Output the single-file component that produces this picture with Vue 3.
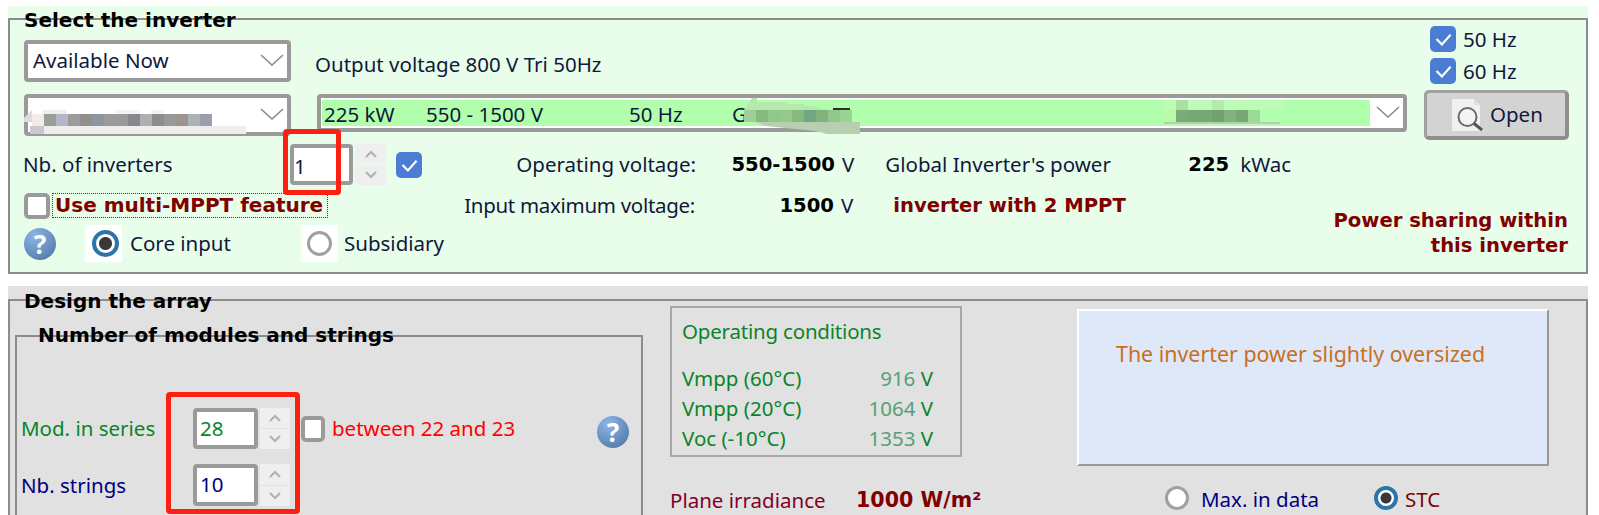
<script setup>
// blurred-out parts of the screenshot, one colour per mosaic cell
const brandBlur = ['#f3ece6', '#9a9d99', '#b2b8ca', '#9c9c9c', '#958f8c', '#8f969e', '#9b9b9e', '#9a9a9a', '#87878d', '#adb1ae', '#8f8c8c', '#999999', '#9e9390', '#acb1b3', '#9e9eaa']
const modelBlur = ['#9fce98', '#84ba80', '#8fc98a', '#93c88e', '#89b87d', '#71a685', '#82b27e', '#8fc88a', '#99d492']
const refTop = ['#bdfcb6', '#a9dfa0', '#bdfcb6', '#bdfcb6', '#b5eaac', '#bdfcb6', '#bdfcb6', '#bdfcb6', '#bdfcb6', '#bdfcb6']
const refLow = ['#b9f9a8', '#7bab77', '#75a974', '#75a974', '#6fa26f', '#81b37c', '#75a872', '#9cdb97']
</script>

<template>
  <div class="page">
    <!-- Select the inverter -->
    <section class="panel panel-green">
      <div class="group group-top">
        <h2 class="legend">Select the inverter</h2>

        <div class="top-band">
          <div class="top-left">
            <div class="row-a">
              <div class="select select-small">
                <span class="avail">Available Now</span>
                <svg class="chevron" viewBox="0 0 24 12"><path d="M1 1 L12 11 L23 1" /></svg>
              </div>
              <span class="output-text">Output voltage 800 V Tri 50Hz</span>
            </div>
            <div class="row-b">
              <div class="select select-small">
                <svg class="blur blur-brand" width="240" height="30" viewBox="0 0 240 30">
                  <path d="M0 12 L8 4 V16 Z M0 12 V16 H8 Z" fill="#dcdcdc" />
                  <rect x="19" y="4" width="24" height="4" fill="#f0efe6" />
                  <rect x="91" y="4" width="24" height="4" fill="#f4f4f4" />
                  <rect x="127" y="4" width="12" height="4" fill="#f2f2f2" />
                  <rect v-for="(c, i) in brandBlur" :key="i" :x="8 + i * 12" y="8" width="12" height="12" :fill="c" />
                  <rect x="6" y="20" width="216" height="8" fill="#eeeeee" />
                  <rect x="6" y="20" width="14" height="8" fill="#c9cacf" />
                </svg>
                <svg class="chevron" viewBox="0 0 24 12"><path d="M1 1 L12 11 L23 1" /></svg>
              </div>
              <div class="select select-model">
                <div class="model-line">
                  <span class="m-power">225 kW</span>
                  <span class="m-volt">550 - 1500 V</span>
                  <span class="m-hz">50 Hz</span>
                  <span class="m-g">G</span>
                  <svg class="blur blur-model" width="160" height="50" viewBox="0 0 160 50">
                    <path d="M32 8 H37 V12 H67 V14 H84 V16 H97 V18 L113 20 H24 Z" fill="#b7e8ae" />
                    <rect x="113" y="18" width="17" height="2" fill="#2a2f20" />
                    <rect v-for="(c, i) in modelBlur" :key="i" :x="24 + i * 12" y="20" width="12" height="12" :fill="c" />
                    <path d="M36 32 H140 V44 H107 L95 41 L65 38 L45 36 Z" fill="#b7cfb0" />
                  </svg>
                  <svg class="blur blur-ref" width="160" height="50" viewBox="0 0 160 50">
                    <rect v-for="(c, i) in refTop" :key="i" :x="14 + i * 12" y="10" width="12" height="10" :fill="c" />
                    <rect v-for="(c, i) in refLow" :key="i" :x="14 + i * 12" y="20" width="12" height="12" :fill="c" />
                    <rect x="14" y="32" width="116" height="2" fill="#b3cfaf" />
                  </svg>
                </div>
                <svg class="chevron" viewBox="0 0 24 12"><path d="M1 1 L12 11 L23 1" /></svg>
              </div>
            </div>
          </div>

          <div class="top-right">
            <label class="hz">
              <span class="check on"><svg viewBox="0 0 24 24"><path d="M6 12 L11 17 L19 8" /></svg></span>50 Hz
            </label>
            <label class="hz">
              <span class="check on"><svg viewBox="0 0 24 24"><path d="M6 12 L11 17 L19 8" /></svg></span>60 Hz
            </label>
            <button class="open-btn">
              <svg class="open-icon" width="31" height="32" viewBox="0 0 31 32">
                <path d="M0 0 H22 L28 6 V32 H0 Z" fill="#f0f0f0" />
                <path d="M22 0 V6 H28" fill="#dedede" />
                <circle cx="15.5" cy="18" r="9" fill="#f4f4f4" stroke="#6a6a6a" stroke-width="2" />
                <path d="M22 24.5 L30 31" stroke="#555" stroke-width="3" />
              </svg>
              Open
            </button>
          </div>
        </div>

        <div class="low-band">
          <div class="low-left">
            <div class="row-c">
              <span class="nb-label">Nb. of inverters</span>
              <div class="spin">
                <div class="spin-input spin-input-one">1</div>
                <div class="spin-btns">
                  <span><svg viewBox="0 0 14 8"><path d="M2 7 L7 2 L12 7" /></svg></span>
                  <span><svg viewBox="0 0 14 8"><path d="M2 1 L7 6 L12 1" /></svg></span>
                </div>
                <div class="red-box red-box-one"></div>
              </div>
              <span class="check on check-nb"><svg viewBox="0 0 24 24"><path d="M6 12 L11 17 L19 8" /></svg></span>
              <span class="stat-label stat-label-c">Operating voltage:</span>
              <b class="stat-value">550-1500</b>
              <span class="unit">V</span>
              <span class="global-label">Global Inverter's power</span>
              <b>225</b>
              <span class="kwac">kWac</span>
            </div>
            <div class="row-d">
              <span class="check"></span>
              <span class="mppt-label">Use multi-MPPT feature</span>
              <span class="stat-label stat-label-d">Input maximum voltage:</span>
              <b class="stat-value">1500</b>
              <span class="unit">V</span>
              <b class="mppt-note">inverter with 2 MPPT</b>
            </div>
            <div class="row-e">
              <span class="help">?</span>
              <div class="radio-opt radio-core">
                <span class="radio-box"><span class="radio on"></span></span>
                Core input
              </div>
              <div class="radio-opt radio-sub">
                <span class="radio-box"><span class="radio"></span></span>
                Subsidiary
              </div>
            </div>
          </div>
          <b class="power-sharing">Power sharing within<br>this inverter</b>
        </div>
      </div>
    </section>

    <!-- Design the array -->
    <section class="panel panel-gray">
      <div class="group group-design">
        <h2 class="legend">Design the array</h2>

        <div class="group group-modules">
          <h2 class="legend legend-modules">Number of modules and strings</h2>
          <div class="red-box red-box-two"></div>

          <div class="mod-row mod-series">
            <span class="mod-label green">Mod. in series</span>
            <div class="spin spin-mod">
              <div class="spin-input green">28</div>
              <div class="spin-btns">
                <span><svg viewBox="0 0 14 8"><path d="M2 7 L7 2 L12 7" /></svg></span>
                <span><svg viewBox="0 0 14 8"><path d="M2 1 L7 6 L12 1" /></svg></span>
              </div>
            </div>
            <span class="check check-mod"></span>
            <span class="between">between 22 and 23</span>
            <span class="help help-mod">?</span>
          </div>
          <div class="mod-row mod-strings">
            <span class="mod-label navy">Nb. strings</span>
            <div class="spin spin-mod">
              <div class="spin-input navy">10</div>
              <div class="spin-btns">
                <span><svg viewBox="0 0 14 8"><path d="M2 7 L7 2 L12 7" /></svg></span>
                <span><svg viewBox="0 0 14 8"><path d="M2 1 L7 6 L12 1" /></svg></span>
              </div>
            </div>
          </div>
        </div>

        <div class="design-right">
          <div class="boxes">
            <div class="op-box">
              <div class="op-title">Operating conditions</div>
              <div class="op-row"><span>Vmpp (60°C)</span><span><em>916</em> V</span></div>
              <div class="op-row"><span>Vmpp (20°C)</span><span><em>1064</em> V</span></div>
              <div class="op-row"><span>Voc (-10°C)</span><span><em>1353</em> V</span></div>
            </div>
            <div class="msg-box">The inverter power slightly oversized</div>
          </div>
          <div class="plane-row">
            <span class="plane-label">Plane irradiance</span>
            <b class="plane-value">1000 W/m²</b>
            <span class="radio radio-small radio-max"></span>
            <span class="navy max-label">Max. in data</span>
            <span class="radio radio-small on radio-stc"></span>
            <span class="stc-label">STC</span>
          </div>
        </div>
      </div>
    </section>
  </div>
</template>

<style scoped>
.page {
  width: 1599px;
  height: 515px;
  overflow: hidden;
  background: #fff;
  font-family: "Noto Sans", sans-serif;
  font-size: 20.5px;
  color: #10183a;
  line-height: 25px;
}

.panel {
  width: 1580px;
  margin-left: 8px;
  box-sizing: border-box;
  overflow: hidden;
}

.panel-green {
  margin-top: 6px;
  height: 268px;
  padding-top: 12px;
  background: #e9fdeb;
}

.panel-gray {
  margin-top: 12px;
  height: 229px;
  padding-top: 13px;
  background: #e1e1e1;
}

/* group box with a legend cut into the top border */
.group {
  position: relative;
  box-sizing: border-box;
  border: 2px solid #8c8c8c;
}

.group-top {
  height: 256px;
  padding: 6px 18px 0 14px;
}

.group-design {
  display: flex;
  height: 260px;
  padding-left: 5px;
}

.legend {
  position: absolute;
  top: -13px;
  left: 14px;
  margin: 0;
  font-family: "DejaVu Sans", sans-serif;
  font-size: 20px;
  line-height: 26px;
  font-weight: 700;
  color: #000;
  white-space: nowrap;
}

.legend-modules {
  top: -15px;
  left: 21px;
}

.top-band {
  display: flex;
  gap: 17px;
  height: 113px;
}

.top-left {
  width: 1383px;
  padding-top: 14px;
  box-sizing: border-box;
}

.row-a {
  display: flex;
  height: 42px;
}

.row-b {
  display: flex;
  align-items: flex-start;
  margin-top: 12px;
}

.avail {
  margin-top: -2px;
}

.output-text {
  margin: 12px 0 0 24px;
}

.select {
  position: relative;
  display: flex;
  align-items: center;
  box-sizing: border-box;
  border: 4px solid #9a9a9a;
  border-radius: 4px;
  background: #fff;
}

.select-small {
  width: 267px;
  height: 42px;
  padding-left: 5px;
}

.select-model {
  width: 1090px;
  height: 38px;
  margin-left: 26px;
  padding-left: 1px;
}

.chevron {
  position: absolute;
  right: 3px;
  top: 10px;
  width: 24px;
  height: 12px;
  fill: none;
  stroke: #8c8c8c;
  stroke-width: 1.6;
}

.select-model .chevron {
  top: 8px;
}

.model-line {
  position: relative;
  display: flex;
  width: 1048px;
  height: 26px;
  line-height: 29px;
  background: #b1ffad;
  white-space: nowrap;
}

.m-power {
  width: 104px;
  padding-left: 2px;
  box-sizing: border-box;
}

.m-volt {
  width: 203px;
}

.m-hz {
  width: 103px;
}

/* mosaics sit over the select, border included */
.blur {
  position: absolute;
  display: block;
}

.blur-brand {
  left: -4px;
  top: 8px;
}

.blur-model {
  left: 398px;
  top: -10px;
}

.blur-ref {
  left: 828px;
  top: -10px;
}

.top-right {
  width: 145px;
}

.hz {
  display: flex;
  align-items: center;
  gap: 7px;
  height: 26px;
  margin: 0 0 6px 6px;
  line-height: 28px;
}

.check {
  display: block;
  flex: none;
  box-sizing: border-box;
  width: 26px;
  height: 26px;
  border: 4px solid #9a9a9a;
  border-radius: 5px;
  background: #fff;
}

.check.on {
  border: 0;
  background: #4a7dd3;
}

.check svg {
  display: block;
  fill: none;
  stroke: #fff;
  stroke-width: 2;
}

.open-btn {
  display: flex;
  align-items: center;
  gap: 7px;
  box-sizing: border-box;
  width: 145px;
  height: 50px;
  padding: 0 0 0 25px;
  border-style: solid;
  border-width: 3px 4px 4px 3px;
  border-color: #a0a0a0 #8f8f8f #8f8f8f #a0a0a0;
  border-radius: 5px;
  background: #d3d3d3;
  font: inherit;
  color: #10183a;
}

.low-band {
  display: grid;
  grid-template-columns: 1fr auto;
  margin-top: 5px;
  height: 118px;
}

.row-c {
  display: flex;
  align-items: center;
  height: 41px;
  white-space: nowrap;
}

.nb-label {
  width: 266px;
  margin-left: -1px;
  padding-right: 1px;
  box-sizing: content-box;
}

.spin {
  position: relative;
  display: flex;
  gap: 2px;
  width: 96px;
  height: 41px;
}

.spin-input {
  box-sizing: border-box;
  width: 63px;
  height: 100%;
  padding-left: 3px;
  border: 4px solid #9a9a9a;
  border-radius: 4px;
  background: #fff;
  line-height: 33px;
}

.spin-input-one {
  padding-left: 0;
  line-height: 37px;
}

.spin-btns {
  display: flex;
  flex-direction: column;
  gap: 1px;
  flex: 1;
}

.spin-btns span {
  display: flex;
  flex: 1;
  align-items: center;
  justify-content: center;
  background: #efefef;
}

.spin-btns svg {
  width: 14px;
  height: 8px;
  fill: none;
  stroke: #b0b0b0;
  stroke-width: 2;
}

.red-box {
  position: absolute;
  box-sizing: border-box;
  border: 5px solid #fb2012;
  border-radius: 4px;
}

.red-box-one {
  left: -7px;
  top: -15px;
  width: 58px;
  height: 66px;
}

.red-box-two {
  left: 149px;
  top: 55px;
  width: 134px;
  height: 122px;
}

.check-nb {
  margin-left: 10px;
}

.stat-label {
  text-align: right;
}

.stat-label-c {
  width: 274px;
}

.stat-label-d {
  width: 367px;
  letter-spacing: -0.3px;
}

b {
  font-family: "DejaVu Sans", sans-serif;
  font-size: 19.6px;
  color: #000;
}

.stat-value {
  width: 139px;
  text-align: right;
}

.unit {
  margin-left: 7px;
}

.global-label {
  width: 303px;
  margin-left: 31px;
}

.kwac {
  margin-left: 11px;
}

.row-d {
  display: flex;
  align-items: center;
  height: 25px;
  margin-top: 8px;
  white-space: nowrap;
}

.mppt-label {
  box-sizing: border-box;
  width: 276px;
  height: 25px;
  margin-left: 2px;
  padding-left: 2px;
  border: 1px dotted #1a4a4a;
  font-family: "DejaVu Sans", sans-serif;
  font-size: 20px;
  font-weight: 700;
  line-height: 23px;
  color: #800000;
  overflow: hidden;
}

.mppt-note {
  margin-left: 40px;
  color: #800000;
}

.row-e {
  display: flex;
  align-items: center;
  height: 37px;
  margin-top: 7px;
}

.help {
  display: block;
  flex: none;
  width: 32px;
  height: 32px;
  border-radius: 50%;
  background: radial-gradient(circle at 35% 25%, #8db6e6, #4f78a8 90%);
  font-family: "Noto Sans", sans-serif;
  font-size: 26px;
  font-weight: 700;
  line-height: 32px;
  color: #fff;
  text-align: center;
}

.help-mod {
  margin-top: 7px;
}

.radio-opt {
  display: flex;
  align-items: center;
  gap: 8px;
  white-space: nowrap;
}

.radio-core {
  width: 216px;
  margin-left: 29px;
}

.radio-sub {
  gap: 6px;
}

.radio-box {
  display: flex;
  align-items: center;
  justify-content: center;
  width: 37px;
  height: 37px;
  background: #fff;
}

.radio {
  display: block;
  box-sizing: border-box;
  width: 25px;
  height: 25px;
  border: 3px solid #a0a0a0;
  border-radius: 50%;
  background: #fff;
}

.radio.on {
  width: 27px;
  height: 27px;
  margin-left: 4px;
  border: 4px solid #2d74a8;
  background: radial-gradient(circle, #383838 0 6px, #fff 7px);
}

.radio-small,
.radio-small.on {
  flex: none;
  width: 24px;
  height: 24px;
  margin-left: 0;
}

.radio-small.on {
  background: radial-gradient(circle, #383838 0 5px, #fff 6px);
}

.power-sharing {
  align-self: end;
  margin-bottom: 4px;
  line-height: 25px;
  color: #800000;
  text-align: right;
  white-space: nowrap;
}

/* number of modules and strings */
.group-modules {
  flex: none;
  width: 628px;
  height: 240px;
  margin-top: 34px;
  padding: 71px 0 0 4px;
}

.mod-row {
  display: flex;
  align-items: center;
  height: 41px;
  white-space: nowrap;
}

.mod-strings {
  height: 42px;
  margin-top: 15px;
}

.mod-label {
  width: 172px;
}

.spin-mod {
  width: 97px;
  height: 100%;
}

.spin-mod .spin-input {
  width: 65px;
}

.check-mod {
  width: 24px;
  margin-left: 11px;
}

.between {
  width: 272px;
  box-sizing: border-box;
  padding-left: 7px;
  color: #ff0000;
}

.green {
  color: #0a842a;
}

.navy {
  color: #000080;
}

.design-right {
  flex: none;
  width: 890px;
  margin-left: 27px;
}

.boxes {
  display: flex;
  align-items: flex-start;
  height: 186px;
}

.op-box {
  box-sizing: border-box;
  width: 292px;
  height: 151px;
  margin-top: 5px;
  padding: 8px 27px 0 10px;
  border: 2px solid #a8a8a8;
  line-height: 30px;
  color: #0a842a;
}

.op-title {
  margin-bottom: 17px;
  letter-spacing: -0.2px;
}

.op-row {
  display: flex;
  justify-content: space-between;
}

.op-row em {
  font-style: normal;
  color: #55a077;
}

.msg-box {
  box-sizing: border-box;
  width: 472px;
  height: 157px;
  margin: 8px 0 0 115px;
  padding: 28px 0 0 37px;
  border: 2px solid;
  border-color: #fff #999 #999 #fff;
  background: #dfe8f8;
  font-size: 21.4px;
  line-height: 30px;
  color: #c8701e;
}

.plane-row {
  display: flex;
  align-items: center;
  height: 28px;
  white-space: nowrap;
}

.plane-label {
  width: 186px;
  margin-top: -2px;
  color: #80002a;
}

.plane-value {
  width: 309px;
  margin-top: -2px;
  font-size: 20.6px;
  color: #800000;
}

.radio-max {
  margin-top: -6px;
}

.max-label {
  width: 173px;
  margin-left: 12px;
  margin-top: -4px;
}

.radio-stc {
  margin-top: -6px;
}

.stc-label {
  margin-left: 7px;
  margin-top: -4px;
  color: #800000;
}
</style>
